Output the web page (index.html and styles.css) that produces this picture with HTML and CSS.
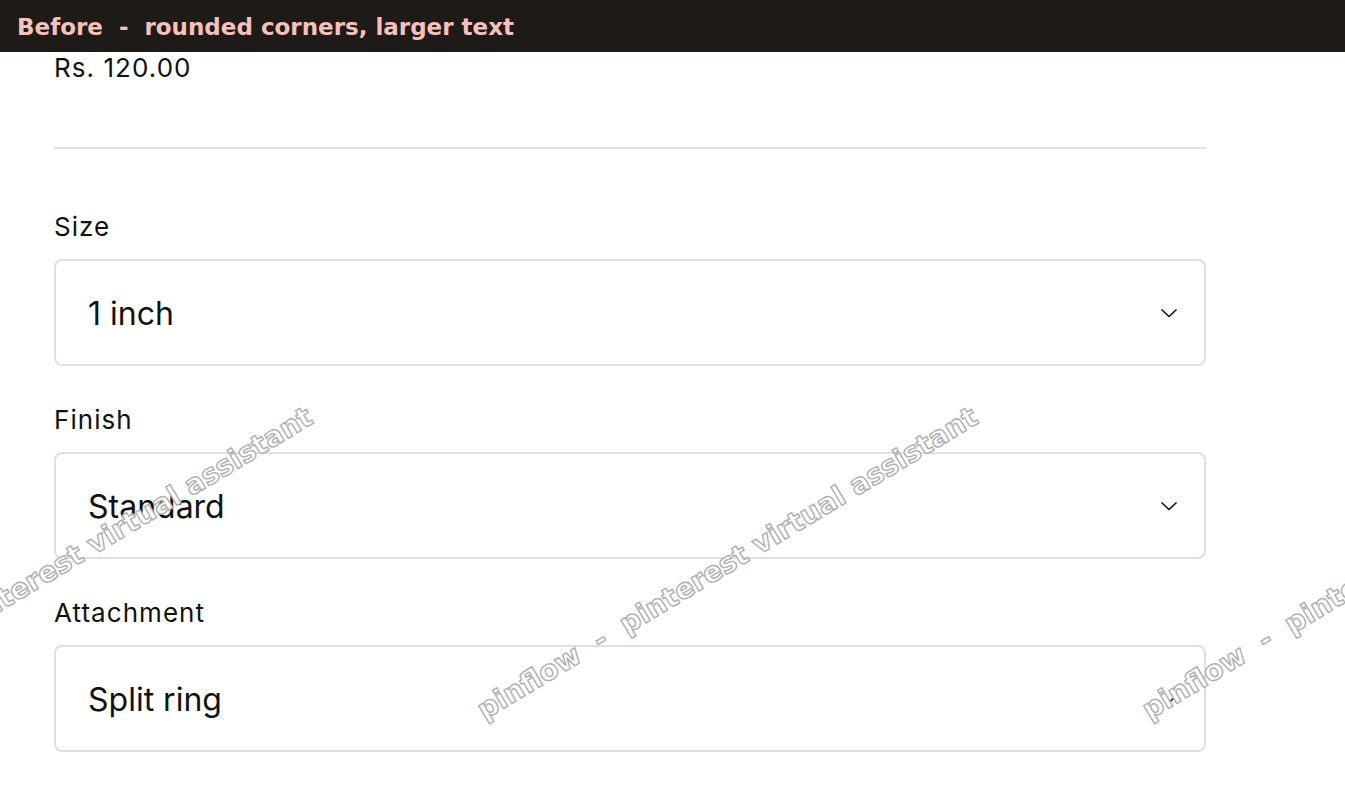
FILE: index.html
```html
<!DOCTYPE html>
<html lang="en">
<head>
<meta charset="utf-8">
<title>Product options</title>
<link rel="stylesheet" href="styles.css">
</head>
<body>
<header class="topbar"><span class="topbar-title">Before  -  rounded corners, larger text</span></header>
<main class="product">
  <div class="price">Rs. 120.00</div>
  <hr class="divider">
  <div class="field">
    <label class="field-label">Size</label>
    <div class="select">
      <span class="select-value">1 inch</span>
      <svg class="chevron" width="18" height="10" viewBox="0 0 18 10"><path d="M1.5 1.5 L9 8.5 L16.5 1.5" fill="none" stroke="#111" stroke-width="1.6"/></svg>
    </div>
  </div>
  <div class="field">
    <label class="field-label">Finish</label>
    <div class="select">
      <span class="select-value">Standard</span>
      <svg class="chevron" width="18" height="10" viewBox="0 0 18 10"><path d="M1.5 1.5 L9 8.5 L16.5 1.5" fill="none" stroke="#111" stroke-width="1.6"/></svg>
    </div>
  </div>
  <div class="field">
    <label class="field-label">Attachment</label>
    <div class="select">
      <span class="select-value">Split ring</span>
      <svg class="chevron" width="18" height="10" viewBox="0 0 18 10"><path d="M1.5 1.5 L9 8.5 L16.5 1.5" fill="none" stroke="#111" stroke-width="1.6"/></svg>
    </div>
  </div>
</main>
<div class="watermark wm-1">pinflow  -  pinterest virtual assistant</div>
<div class="watermark wm-2">pinflow  -  pinterest virtual assistant</div>
<div class="watermark wm-3">pinflow  -  pinterest virtual assistant</div>
</body>
</html>
```
FILE: styles.css
```css
html, body {
  margin: 0;
  padding: 0;
  background: #ffffff;
  overflow: hidden;
}
body {
  width: 1345px;
  height: 807px;
  position: relative;
  font-family: Inter, "Liberation Sans", sans-serif;
  color: #111111;
}
.topbar {
  height: 52px;
  background: #1e1a17;
  display: flex;
  align-items: center;
  padding-left: 17px;
}
.topbar-title {
  font-family: "DejaVu Sans", sans-serif;
  font-weight: bold;
  font-size: 23px;
  color: #f6c1ba;
  white-space: pre;
  position: relative;
  top: 1px;
}
.product {
  width: 1152px;
  margin-left: 54px;
  padding-top: 4px;
}
.price {
  font-size: 26px;
  line-height: 24px;
  letter-spacing: 1.05px;
}
.divider {
  border: 0;
  height: 2px;
  background: #e0e0e0;
  margin: 67px 0 0 0;
}
.field {
  display: flex;
  flex-direction: column;
}
.divider + .field {
  margin-top: 63px;
}
.field + .field {
  margin-top: 39px;
}
.field-label {
  font-size: 26px;
  letter-spacing: 1.05px;
  line-height: 29px;
  margin-bottom: 18px;
}
.select {
  height: 102px;
  border: 2px solid #e0e0e0;
  border-radius: 8px;
  display: flex;
  align-items: center;
  justify-content: space-between;
  padding: 1px 26px 0 32px;
}
.select-value {
  font-size: 32px;
}
.chevron {
  display: block;
}
.watermark {
  position: absolute;
  font-family: "DejaVu Sans", sans-serif;
  font-weight: bold;
  font-size: 28px;
  white-space: pre;
  color: #ffffff;
  -webkit-text-stroke: 1.4px #b0b0b0;
  transform-origin: 0 100%;
  transform: rotate(-31deg);
  line-height: 32px;
  pointer-events: none;
}
.wm-1 { left: -177px; top: 694px; }
.wm-2 { left: 488px; top: 694px; }
.wm-3 { left: 1153px; top: 694px; }
```
